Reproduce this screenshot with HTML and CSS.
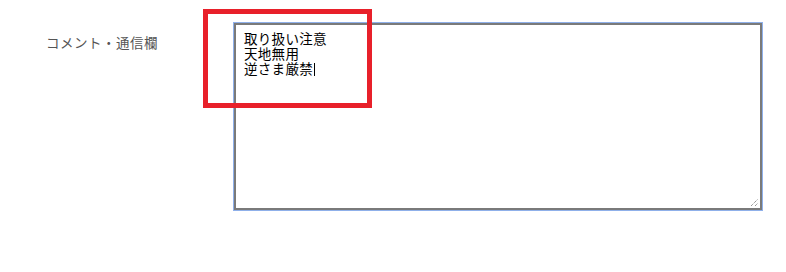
FILE: index.html
```html
<!DOCTYPE html>
<html lang="ja">
<head>
<meta charset="utf-8">
<title>コメント・通信欄</title>
<link rel="stylesheet" href="styles.css">
</head>
<body>
<div class="form-row">
  <label class="field-label">コメント・通信欄</label>
  <div class="textbox" role="textbox" aria-multiline="true">
    <div class="line">取り扱い注意</div>
    <div class="line">天地無用</div>
    <div class="line">逆さま厳禁<span class="caret"></span></div>
    <svg class="grip" width="9" height="9" viewBox="0 0 9 9">
      <path d="M1 8 L8 1 M5 8 L8 5" stroke="#6a6a6a" stroke-width="1" stroke-dasharray="1 1" fill="none"/>
    </svg>
  </div>
</div>
<div class="highlight"></div>
</body>
</html>
```
FILE: styles.css
```css
html, body {
  margin: 0;
  padding: 0;
  background: #ffffff;
}
body {
  width: 786px;
  height: 272px;
  position: relative;
  font-family: "Noto Sans CJK JP", "Noto Sans", sans-serif;
}
.form-row {
  display: grid;
  grid-template-columns: 188px 528px;
  padding: 23px 0 0 46px;
}
.field-label {
  font-size: 13.5px;
  line-height: 20px;
  color: #555555;
  padding-top: 9px;
  letter-spacing: 0.5px;
}
.textbox {
  position: relative;
  box-sizing: border-box;
  width: 528px;
  height: 187px;
  border-style: solid;
  border-width: 2px 1px 1px 2px;
  border-color: #7a7a7a;
  box-shadow: 0 0 0 1px #8fb0ea, inset -1px -1px 0 #7a7a7a;
  padding: 6px 8px;
  font-size: 13.5px;
  line-height: 15px;
  color: #000000;
  letter-spacing: 0.3px;
}
.line {
  white-space: nowrap;
  height: 15px;
}
.caret {
  display: inline-block;
  width: 1px;
  height: 13px;
  background: #000000;
  vertical-align: -2px;
  margin-left: 1px;
}
.grip {
  position: absolute;
  right: 2px;
  bottom: 2px;
}
.highlight {
  position: absolute;
  left: 203px;
  top: 9px;
  width: 169px;
  height: 99px;
  box-sizing: border-box;
  border: 5px solid #e8202a;
}
```
